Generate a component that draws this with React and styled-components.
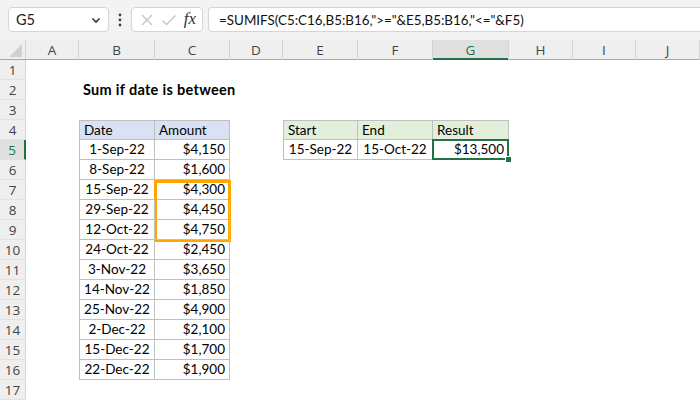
import styled, { createGlobalStyle } from "styled-components";

const GlobalStyle = createGlobalStyle`
  html, body { margin: 0; padding: 0; background: #fff; }
  body { width: 700px; height: 400px; overflow: hidden; }
`;

const COLS = "26px 53px 76px 75px 53px 75px 75px 76px 64px 63px 64px";
const LETTERS = ["A", "B", "C", "D", "E", "F", "G", "H", "I", "J"];
const GREEN = "#217346";
const LINE = "#bfbfbf";
const CELL_FONT = `Lato, "Liberation Sans", sans-serif`;
const UI_FONT = `"Open Sans", "Noto Sans", sans-serif`;

const Page = styled.div`
  width: 700px;
  height: 400px;
  overflow: hidden;
`;

const Toolbar = styled.div`
  height: 40px;
  box-sizing: border-box;
  background: #f3f3f3;
  display: flex;
  align-items: flex-start;
  padding: 7px 0 0 8px;
  font-family: ${CELL_FONT};
`;

const Box = styled.div`
  height: 25px;
  box-sizing: border-box;
  background: #fff;
  border: 1px solid #d5d5d5;
  border-radius: 4px;
  display: flex;
  align-items: center;
`;

const NameBox = styled(Box)`
  width: 101px;
  padding: 0 6px 0 7px;
  justify-content: space-between;
  font-size: 14.5px;
  color: #222;
`;

const Dots = styled.div`
  width: 22px;
  height: 25px;
  display: flex;
  align-items: center;
  justify-content: center;
`;

const FxBox = styled(Box)`
  width: 72px;
  padding: 0 6px 0 8px;
  justify-content: space-between;
`;

const Fx = styled.span`
  font-family: "Liberation Serif", serif;
  font-style: italic;
  font-size: 17px;
  color: #333;
  margin-top: -2px;
`;

const FormulaBox = styled(Box)`
  flex: 1;
  margin-left: 5px;
  border-right: none;
  border-radius: 4px 0 0 4px;
  padding-left: 10px;
  font-size: 13.4px;
  color: #111;
  white-space: nowrap;
`;

const Row = styled.div`
  display: grid;
  grid-template-columns: ${COLS};
  height: 20px;
`;

const HeaderRow = styled(Row)`
  background: #efefef;
  border-bottom: 1px solid #a8a8a8;
  box-sizing: border-box;
`;

const Corner = styled.div`
  position: relative;
  border-right: 1px solid #d4d4d4;
  &::after {
    content: "";
    position: absolute;
    right: 3px;
    bottom: 2px;
    border-left: 13px solid transparent;
    border-bottom: 13px solid #d0d0d0;
  }
`;

const ColHead = styled.div`
  display: flex;
  align-items: center;
  justify-content: center;
  font-family: ${UI_FONT};
  font-size: 13.5px;
  color: ${(p) => (p.$active ? GREEN : "#444")};
  background: ${(p) => (p.$active ? "#e0e0e0" : "transparent")};
  border-right: 1px solid #d4d4d4;
  box-shadow: ${(p) => (p.$active ? `inset 0 -2px 0 ${GREEN}` : "none")};
  margin-bottom: -1px;
`;

const RowHead = styled.div`
  display: flex;
  align-items: center;
  justify-content: center;
  font-family: ${UI_FONT};
  font-size: 13.5px;
  color: ${(p) => (p.$active ? GREEN : "#444")};
  background: ${(p) => (p.$active ? "#e0e0e0" : "#efefef")};
  border-right: ${(p) => (p.$active ? `2px solid ${GREEN}` : "1px solid #d4d4d4")};
  border-bottom: 1px solid #e2e2e2;
  box-sizing: border-box;
`;

const Cell = styled.div`
  position: relative;
  box-sizing: border-box;
  display: flex;
  align-items: center;
  justify-content: ${(p) => p.$align || "flex-start"};
  padding: 0 4px 1px 4px;
  font-family: ${CELL_FONT};
  font-size: ${(p) => (p.$bold ? "14.5px" : "13.5px")};
  font-weight: ${(p) => (p.$bold ? 700 : 400)};
  letter-spacing: ${(p) => (p.$bold ? "0.3px" : "0")};
  color: #000;
  white-space: nowrap;
  background: ${(p) => p.$bg || "transparent"};
  border-left: ${(p) => (p.$bl ? `1px solid ${LINE}` : "none")};
  border-top: ${(p) => (p.$bt ? `1px solid ${LINE}` : "none")};
  border-right: ${(p) => (p.$box ? `1px solid ${LINE}` : "none")};
  border-bottom: ${(p) => (p.$box ? `1px solid ${LINE}` : "none")};
`;

const Highlight = styled.div`
  position: absolute;
  left: -1px;
  top: 0;
  width: 77px;
  height: 62px;
  box-sizing: border-box;
  border: 3px solid #ffa500;
  pointer-events: none;
`;

const Selection = styled.div`
  position: absolute;
  left: -1px;
  top: -1px;
  right: -1px;
  bottom: -1px;
  border: 2px solid ${GREEN};
  pointer-events: none;
  &::after {
    content: "";
    position: absolute;
    right: -5px;
    bottom: -5px;
    width: 5px;
    height: 5px;
    background: ${GREEN};
    border: 1px solid #fff;
  }
`;

const data = [
  ["1-Sep-22", "$4,150"],
  ["8-Sep-22", "$1,600"],
  ["15-Sep-22", "$4,300"],
  ["29-Sep-22", "$4,450"],
  ["12-Oct-22", "$4,750"],
  ["24-Oct-22", "$2,450"],
  ["3-Nov-22", "$3,650"],
  ["14-Nov-22", "$1,850"],
  ["25-Nov-22", "$4,900"],
  ["2-Dec-22", "$2,100"],
  ["15-Dec-22", "$1,700"],
  ["22-Dec-22", "$1,900"],
];

const BLUE = "#d9e1f2";
const LGREEN = "#e2efda";

const buildCells = (r) => {
  // returns 10 cells for columns A..J
  const cells = Array.from({ length: 10 }, () => null);
  if (r === 2) {
    cells[1] = { text: "Sum if date is between", bold: true };
  }
  if (r === 4) {
    cells[1] = { text: "Date", bg: BLUE, box: true, bl: true, bt: true };
    cells[2] = { text: "Amount", bg: BLUE, box: true, bt: true };
    cells[4] = { text: "Start", bg: LGREEN, box: true, bl: true, bt: true };
    cells[5] = { text: "End", bg: LGREEN, box: true, bt: true };
    cells[6] = { text: "Result", bg: LGREEN, box: true, bt: true };
  }
  if (r >= 5 && r <= 16) {
    const [d, a] = data[r - 5];
    cells[1] = { text: d, align: "center", box: true, bl: true };
    cells[2] = { text: a, align: "flex-end", box: true, highlight: r === 7 };
  }
  if (r === 5) {
    cells[4] = { text: "15-Sep-22", align: "center", box: true, bl: true };
    cells[5] = { text: "15-Oct-22", align: "center", box: true };
    cells[6] = { text: "$13,500", align: "flex-end", box: true, selected: true };
  }
  return cells;
};

const Chevron = () => (
  <svg width="12" height="12" viewBox="0 0 12 12">
    <path d="M2.5 4.5 L6 8 L9.5 4.5" fill="none" stroke="#333" strokeWidth="1.6" />
  </svg>
);

const VDots = () => (
  <svg width="4" height="16" viewBox="0 0 4 16">
    <circle cx="2" cy="3" r="1.4" fill="#444" />
    <circle cx="2" cy="8" r="1.4" fill="#444" />
    <circle cx="2" cy="13" r="1.4" fill="#444" />
  </svg>
);

const Cross = () => (
  <svg width="14" height="14" viewBox="0 0 14 14">
    <path d="M2 2 L12 12 M12 2 L2 12" stroke="#c4c4c4" strokeWidth="1.3" fill="none" />
  </svg>
);

const Check = () => (
  <svg width="16" height="14" viewBox="0 0 16 14">
    <path d="M1.5 7.5 L5.5 11.5 L14.5 2.5" stroke="#c4c4c4" strokeWidth="1.3" fill="none" />
  </svg>
);

const App = () => {
  const rows = Array.from({ length: 17 }, (_, i) => i + 1);
  return (
    <Page>
      <GlobalStyle />
      <Toolbar>
        <NameBox>
          <span>G5</span>
          <Chevron />
        </NameBox>
        <Dots>
          <VDots />
        </Dots>
        <FxBox>
          <Cross />
          <Check />
          <Fx>fx</Fx>
        </FxBox>
        <FormulaBox>=SUMIFS(C5:C16,B5:B16,"&gt;="&amp;E5,B5:B16,"&lt;="&amp;F5)</FormulaBox>
      </Toolbar>
      <HeaderRow>
        <Corner />
        {LETTERS.map((l) => (
          <ColHead key={l} $active={l === "G"}>
            {l}
          </ColHead>
        ))}
      </HeaderRow>
      {rows.map((r) => (
        <Row key={r}>
          <RowHead $active={r === 5}>{r}</RowHead>
          {buildCells(r).map((c, i) =>
            c ? (
              <Cell
                key={i}
                $align={c.align}
                $bg={c.bg}
                $bold={c.bold}
                $box={c.box}
                $bl={c.bl}
                $bt={c.bt}
              >
                {c.text}
                {c.highlight && <Highlight />}
                {c.selected && <Selection />}
              </Cell>
            ) : (
              <Cell key={i} />
            )
          )}
        </Row>
      ))}
    </Page>
  );
};

export default App;
